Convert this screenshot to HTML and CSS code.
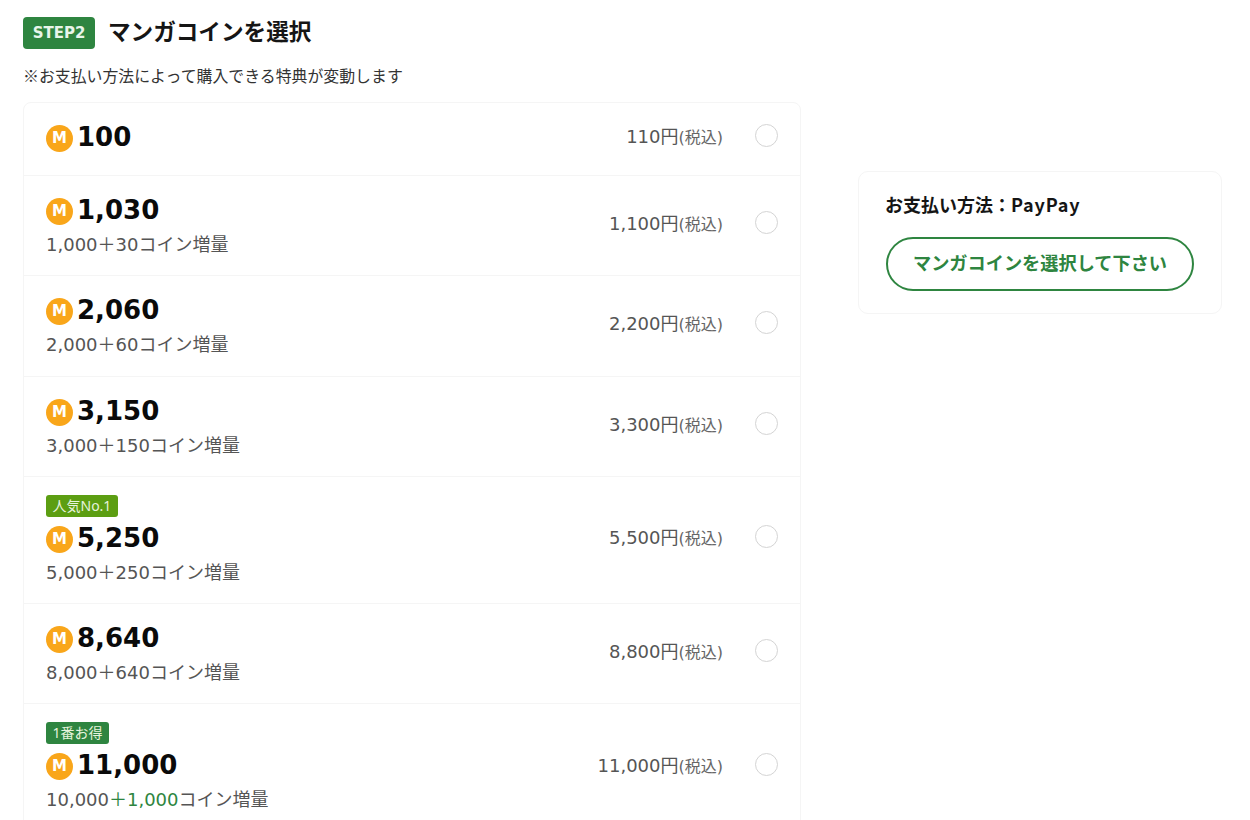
FILE: index.html
```html
<!DOCTYPE html>
<html lang="ja">
<head>
<meta charset="utf-8">
<title>マンガコインを選択</title>
<link rel="stylesheet" href="styles.css">
</head>
<body>
<div class="page">
  <main class="main">
    <header class="head">
      <span class="step">STEP2</span>
      <h1 class="title">マンガコインを選択</h1>
    </header>
    <p class="note">※お支払い方法によって購入できる特典が変動します</p>
    <ul class="list">
      <li class="row row-single">
        <div class="info"><div class="amount"><span class="coin">M</span>100</div></div>
        <div class="side"><span class="price">110円<small>(税込)</small></span><span class="radio"></span></div>
      </li>
      <li class="row">
        <div class="info"><div class="amount"><span class="coin">M</span>1,030</div><div class="sub">1,000＋30コイン増量</div></div>
        <div class="side"><span class="price">1,100円<small>(税込)</small></span><span class="radio"></span></div>
      </li>
      <li class="row">
        <div class="info"><div class="amount"><span class="coin">M</span>2,060</div><div class="sub">2,000＋60コイン増量</div></div>
        <div class="side"><span class="price">2,200円<small>(税込)</small></span><span class="radio"></span></div>
      </li>
      <li class="row">
        <div class="info"><div class="amount"><span class="coin">M</span>3,150</div><div class="sub">3,000＋150コイン増量</div></div>
        <div class="side"><span class="price">3,300円<small>(税込)</small></span><span class="radio"></span></div>
      </li>
      <li class="row">
        <div class="info"><span class="tag tag-popular">人気No.1</span><div class="amount"><span class="coin">M</span>5,250</div><div class="sub">5,000＋250コイン増量</div></div>
        <div class="side"><span class="price">5,500円<small>(税込)</small></span><span class="radio"></span></div>
      </li>
      <li class="row">
        <div class="info"><div class="amount"><span class="coin">M</span>8,640</div><div class="sub">8,000＋640コイン増量</div></div>
        <div class="side"><span class="price">8,800円<small>(税込)</small></span><span class="radio"></span></div>
      </li>
      <li class="row">
        <div class="info"><span class="tag tag-best">1番お得</span><div class="amount"><span class="coin">M</span>11,000</div><div class="sub">10,000<span class="bonus">＋1,000</span>コイン増量</div></div>
        <div class="side"><span class="price">11,000円<small>(税込)</small></span><span class="radio"></span></div>
      </li>
    </ul>
  </main>
  <aside class="card">
    <p class="method">お支払い方法：<span class="pay">PayPay</span></p>
    <button class="cta" type="button">マンガコインを選択して下さい</button>
  </aside>
</div>
</body>
</html>
```
FILE: styles.css
```css
* { box-sizing: border-box; }
html, body { margin: 0; height: 820px; overflow: hidden; background: #fff; }
body {
  font-family: "DejaVu Sans", "Noto Sans CJK JP", sans-serif;
  color: #333;
}
.page {
  display: flex;
  align-items: flex-start;
  gap: 57px;
  padding: 17px 28px 0 23px;
}
.main { width: 778px; flex: none; }
.head { display: flex; align-items: center; gap: 13px; height: 32px; }
.step {
  display: flex;
  align-items: center;
  justify-content: center;
  width: 72px;
  height: 32px;
  border-radius: 4px;
  background: #2e8540;
  color: #e8f5ea;
  font: 700 15px/1 "DejaVu Sans", sans-serif;
}
.title {
  margin: -5px 0 0;
  font: 700 22.6px/32px "Noto Sans CJK JP", sans-serif;
  color: #151515;
}
.note {
  margin: 16px 0 0;
  font: 400 15.9px/22px "Noto Sans CJK JP", sans-serif;
  color: #333;
  height: 37px;
}
.list {
  list-style: none;
  margin: 0;
  padding: 0;
  border: 1px solid #f5f5f5;
  border-radius: 8px 8px 0 0;
}
.row {
  display: flex;
  justify-content: space-between;
  padding: 16px 22px 15.3px 22px;
  border-bottom: 1px solid #f5f5f5;
}
.row-single { min-height: 73px; }
.info { display: flex; flex-direction: column; align-items: flex-start; }
.amount {
  display: flex;
  align-items: center;
  gap: 4px;
  height: 36px;
  font-size: 26px;
  font-weight: 700;
  line-height: 36px;
  color: #0a0a0a;
}
.coin {
  display: flex;
  align-items: center;
  justify-content: center;
  width: 27px;
  height: 27px;
  margin-top: 3px;
  border-radius: 50%;
  background: #f9a61a;
  color: #fff;
  font: 700 15px/1 "DejaVu Sans", sans-serif;
}
.sub { font-size: 18px; line-height: 34px; height: 32px; color: #555; }
.bonus { color: #2e8540; }
.tag {
  display: flex;
  align-items: center;
  height: 22px;
  margin: 2px 0 3px;
  padding: 0 6.5px;
  border-radius: 3px;
  color: #e6f3dc;
  font: 400 14px/1 "Noto Sans", "Noto Sans CJK JP", sans-serif;
}
.tag-popular { background: #5c9e12; }
.tag-best { background: #2e8540; }
.side { display: flex; align-items: center; gap: 32px; padding-bottom: 7px; }
.price { font-size: 18px; line-height: 24px; color: #555; position: relative; top: 2px; }
.price small { font-size: 16px; line-height: 24px; color: #666; }
.radio {
  width: 23px;
  height: 23px;
  border: 1px solid #d4d4d4;
  border-radius: 50%;
  background: #fff;
}
.card {
  width: 364px;
  height: 143px;
  margin-top: 154px;
  flex: none;
  padding: 18px 27px;
  border: 1px solid #f5f5f5;
  border-radius: 10px;
}
.method {
  margin: 0 0 0 -1px;
  font: 700 18px/28px "Noto Sans CJK JP", sans-serif;
  color: #151515;
}
.pay { letter-spacing: 0.8px; }
.cta {
  display: block;
  width: 308px;
  height: 54px;
  margin-top: 19px;
  padding: 0 0 4px;
  border: 2px solid #2e8540;
  border-radius: 27px;
  background: #fff;
  color: #2e8540;
  font: 700 18.2px/1 "Noto Sans CJK JP", sans-serif;
}
```
